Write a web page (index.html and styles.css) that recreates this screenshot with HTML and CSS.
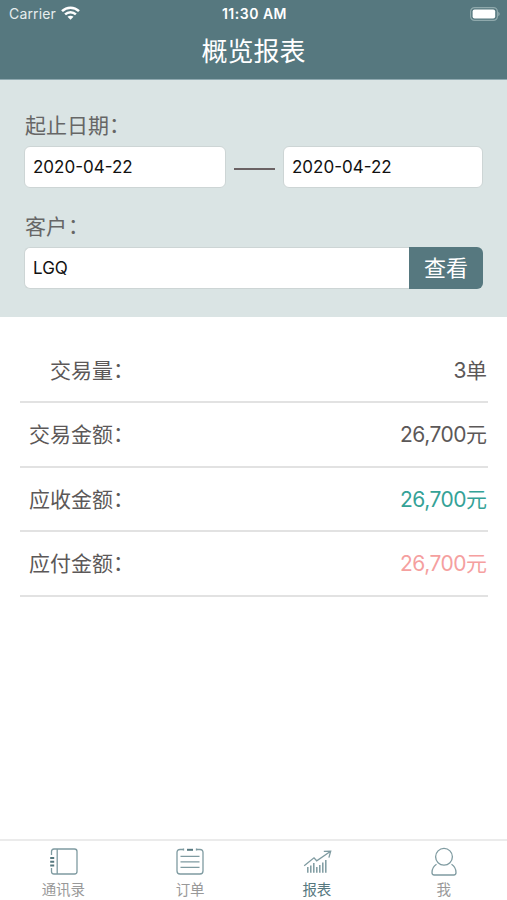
FILE: index.html
```html
<!DOCTYPE html>
<html lang="zh-CN">
<head>
<meta charset="utf-8">
<title>概览报表</title>
<link rel="stylesheet" href="styles.css">
</head>
<body>
<header class="header">
  <div class="status">
    <div class="carrier"><span>Carrier</span>
      <svg class="wifi" width="19" height="14" viewBox="0 0 19 14" fill="none" stroke="#fff" stroke-width="2.5"><path d="M1 5.1C5.8.5 13.2.5 18 5.1M4.1 8.400c3.100-2.900 7.700-2.900 10.800 0"/><path d="M9.500 13.800 6.500 10.800c1.600-1.400 4.400-1.400 6 0z" fill="#fff" stroke="none"/></svg>
    </div>
    <div class="time">11:30 AM</div>
    <svg class="battery" width="30" height="14" viewBox="0 0 30 14"><rect x=".6" y=".6" width="26.800" height="12.800" rx="4" fill="none" stroke="#8fa9ac" stroke-width="1.200"/><rect x="2.600" y="2.400" width="22.600" height="9.200" rx="2" fill="#fff"/><path d="M28.200 4.800c2 .8 2 3.600 0 4.400z" fill="#8fa9ac"/></svg>
  </div>
  <h1 class="title">概览报表</h1>
</header>
<section class="filters">
  <div class="label">起止日期<span class="colon">：</span></div>
  <div class="dates">
    <div class="field">2020-04-22</div>
    <div class="dash"></div>
    <div class="field">2020-04-22</div>
  </div>
  <div class="label customer">客户<span class="colon">：</span></div>
  <div class="search">
    <div class="field query">LGQ</div>
    <button class="button">查看</button>
  </div>
</section>
<main class="report">
  <div class="row"><span class="name">交易量<span class="colon">：</span></span><span class="value">3<span class="unit">单</span></span></div>
  <div class="row"><span class="name">交易金额<span class="colon">：</span></span><span class="value">26,700<span class="unit">元</span></span></div>
  <div class="row"><span class="name">应收金额<span class="colon">：</span></span><span class="value receivable">26,700<span class="unit">元</span></span></div>
  <div class="row"><span class="name">应付金额<span class="colon">：</span></span><span class="value payable">26,700<span class="unit">元</span></span></div>
</main>
<nav class="tabs">
  <div class="tab">
    <svg class="icon" width="30" height="30" viewBox="0 0 30 30"><path d="M3.500 8V4.500Q3.500 2 6 2H26.500Q29 2 29 4.500V24.500Q29 27 26.500 27H6Q3.500 27 3.500 24.500V21M9.200 2V27"/><path class="thick" d="M2.200 11h4M2.200 14.700h4M2.200 18.400h4"/></svg>
    <span>通讯录</span>
  </div>
  <div class="tab">
    <svg class="icon" width="30" height="30" viewBox="0 0 30 30"><path d="M8.500 2.500H5Q2 2.500 2 5.500V24Q2 27 5 27H25Q28 27 28 24V5.500Q28 2.500 25 2.500H21.500M5.500 9.300H24.500M5.500 14.800H24.500M5.500 20.300H24.500"/><path class="thick" d="M12 2.800h6"/><path d="M8.500 1.500v2M21.500 1.500v2"/></svg>
    <span>订单</span>
  </div>
  <div class="tab active">
    <svg class="icon" width="30" height="30" viewBox="0 0 30 30"><path d="M2.200 18.800 12 10.800 14.700 13.800 28.300 4.500M21.800 4.300 28.700 4.200 26.900 10.700"/><path class="bars" d="M5.800 25.700V20M8.800 25.700V18.500M11.800 25.700V16M14.800 25.700V20M17.800 25.700V18M20.800 25.700V15.500M23.800 25.700V13"/></svg>
    <span>报表</span>
  </div>
  <div class="tab">
    <svg class="icon" width="30" height="30" viewBox="0 0 30 30"><circle cx="15" cy="9.800" r="8.400"/><path d="M7.500 17.200C4.200 19.300 3 22.500 3 25.500Q3 28 5.200 28H24.800Q27 28 27 25.500C27 22.500 25.800 19.300 22.500 17.200"/></svg>
    <span>我</span>
  </div>
</nav>
</body>
</html>
```
FILE: styles.css
```css
* { box-sizing: border-box; }
body {
  margin: 0;
  height: 900px;
  display: flex;
  flex-direction: column;
  overflow: hidden;
  background: #fff;
  color: #5c5858;
  font-family: Inter, "Noto Sans CJK SC", sans-serif;
}
.header {
  height: 80px;
  background: #56787f;
  border-bottom: 1px solid #8fa9b0;
  color: #fff;
}
.status {
  display: grid;
  grid-template-columns: 1fr auto 1fr;
  align-items: center;
  height: 27px;
  padding: 0 7px 0 9px;
}
.carrier {
  display: flex;
  align-items: center;
  gap: 5px;
  font-size: 14px;
  letter-spacing: 0.15px;
  color: #e6edee;
}
.wifi { margin-top: -2px; }
.time { font-size: 14px; font-weight: 600; letter-spacing: 0.5px; }
.battery { justify-self: end; }
.title {
  margin: 6px 0 0;
  text-align: center;
  font-size: 26px;
  line-height: 38px;
  font-weight: 400;
}
.filters {
  height: 237px;
  padding: 31px 24px 0;
  background: #dae4e4;
}
.label {
  height: 35px;
  padding-left: 1px;
  font-size: 21px;
  line-height: 30px;
  color: #666;
}
.customer { margin-top: 24px; }
.customer .colon { margin-left: 1px; }
.colon {
  display: inline-block;
  transform: translateY(-1px);
}
.dates { display: flex; align-items: center; height: 42px; }
.field {
  width: 202px;
  height: 42px;
  padding-left: 8px;
  border: 1px solid #cdd5d5;
  border-radius: 6px;
  background: #fff;
  color: #111;
  font-size: 17px;
  line-height: 41px;
}
.dates .field:last-child { width: 200px; }
.dash { width: 41px; height: 2px; margin: 3px 8px 0; background: #6b6264; }
.search { display: flex; }
.query { flex: 1; border-radius: 6px 0 0 6px; border-right: 0; }
.button {
  width: 74px;
  height: 42px;
  padding: 0;
  border: 0;
  border-radius: 0 6px 6px 0;
  background: #56787f;
  color: #fff;
  font: inherit;
  font-size: 22px;
  line-height: 42px;
}
.report { flex: 1; padding: 22px 19px 0 20px; }
.row {
  display: flex;
  justify-content: space-between;
  height: 64.4px;
  padding-right: 1px;
  border-bottom: 2px solid #e2e2e2;
  font-size: 21px;
  line-height: 64px;
}
.name { width: 114px; text-align: right; }
.value { letter-spacing: -0.5px; }
.unit { letter-spacing: 0; }
.receivable { color: #35a297; }
.payable { color: #f5a09f; }
.tabs {
  display: flex;
  height: 61px;
  border-top: 2px solid #ebebeb;
}
.tab {
  flex: 1;
  display: flex;
  flex-direction: column;
  align-items: center;
  padding-top: 6px;
  font-size: 14.5px;
  line-height: 26px;
  color: #999;
}
.active { color: #56787f; }
.icon { flex-shrink: 0; fill: none; stroke: #7f9ba1; stroke-width: 1.3; }
.icon .thick { stroke: #56787f; stroke-width: 2; }
.icon .bars { stroke-width: 1.5; }
```
